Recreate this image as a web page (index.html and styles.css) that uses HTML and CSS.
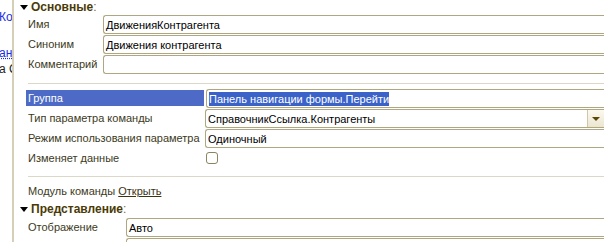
FILE: index.html
```html
<!doctype html>
<html>
<head>
<meta charset="utf-8">
<link rel="stylesheet" href="styles.css">
</head>
<body>
<div class="window">
  <div class="side">
    <div class="side-line link l1">Ко</div>
    <div class="side-line link l2">ан,</div>
    <div class="side-line l3">а С</div>
  </div>
  <div class="props">
    <div class="section-title"><span class="arrow"></span>Основные<span class="colon">:</span></div>

    <div class="row main">
      <div class="label">Имя</div>
      <div class="field">ДвиженияКонтрагента</div>
    </div>
    <div class="row main">
      <div class="label">Синоним</div>
      <div class="field">Движения контрагента</div>
    </div>
    <div class="row main">
      <div class="label">Комментарий</div>
      <div class="field"></div>
    </div>

    <div class="sep first-sep"></div>

    <div class="row cmd">
      <div class="label current">Группа</div>
      <div class="field"><span class="selected">Панель навигации формы.Перейти</span></div>
    </div>
    <div class="row cmd">
      <div class="label">Тип параметра команды</div>
      <div class="field combo">
        <span class="value">СправочникСсылка.Контрагенты</span>
        <span class="drop"><span class="tri"></span></span>
      </div>
    </div>
    <div class="row cmd">
      <div class="label">Режим использования параметра</div>
      <div class="field">Одиночный</div>
    </div>
    <div class="row cmd check-row">
      <div class="label">Изменяет данные</div>
      <div class="checkbox"></div>
    </div>

    <div class="sep"></div>

    <div class="module">Модуль команды <a class="open">Открыть</a></div>

    <div class="section-title second"><span class="arrow"></span>Представление<span class="colon">:</span></div>

    <div class="row view">
      <div class="label">Отображение</div>
      <div class="field">Авто</div>
    </div>
    <div class="row view">
      <div class="label">Подсказка</div>
      <div class="field"></div>
    </div>
  </div>
</div>
</body>
</html>
```

FILE: styles.css
```css
html, body {
    margin: 0;
    padding: 0;
    background: #ffffff;
}
body {
    font-family: "Liberation Sans", Arial, sans-serif;
    font-size: 11px;
    color: #000;
}
.window {
    display: flex;
    width: 604px;
    height: 242px;
    overflow: hidden;
}
.side {
    width: 12px;
    flex: none;
    border-right: 2px solid #d6cfb8;
    overflow: hidden;
    white-space: nowrap;
    font-size: 12px;
}
.side-line {
    height: 16px;
    line-height: 16px;
    margin-left: -1px;
}
.side .link {
    color: #1a2ee6;
}
.side .l1 {
    margin-top: 9px;
}
.side .l2 {
    margin-top: 20px;
    text-decoration: underline dotted;
}
.side .l3 {
    color: #222;
}
.props {
    flex: 1;
    padding-left: 3px;
    overflow: hidden;
}
.section-title {
    display: flex;
    align-items: center;
    height: 14px;
    font-size: 12px;
    font-weight: bold;
    color: #4a3a06;
    white-space: nowrap;
}
.section-title .colon {
    font-weight: normal;
    color: #7a6a40;
}
.arrow {
    width: 0;
    height: 0;
    margin: 0 3px;
    border-left: 4px solid transparent;
    border-right: 4px solid transparent;
    border-top: 5px solid #000;
}
.row {
    display: flex;
    align-items: center;
    height: 20px;
    padding-left: 11px;
    white-space: nowrap;
}
.label {
    flex: none;
    color: #3c3a22;
}
.main .label { width: 74px; }
.cmd .label { width: 174px; }
.view .label { width: 98px; }
.field {
    flex: 1;
    height: 19px;
    line-height: 18px;
    box-sizing: border-box;
    border: 1px solid #aea77f;
    border-right: none;
    border-radius: 3px 0 0 3px;
    padding-left: 2px;
    background: #fff;
    color: #000;
    overflow: hidden;
}
.main .field { margin-left: 1px; }
.cmd .field { margin-left: 3px; }
.cmd .label.current {
    background: #4d6bc6;
    color: #fff;
    height: 16px;
    line-height: 16px;
    margin-left: -2px;
    padding-left: 2px;
    width: 176px;
}
.cmd .label.current + .field { margin-left: 2px; }
.selected {
    background: #3a62c8;
    color: #fff;
    padding: 1px 0;
}
.combo {
    display: flex;
    align-items: stretch;
}
.combo .value { flex: 1; }
.drop {
    width: 16px;
    flex: none;
    display: flex;
    align-items: center;
    justify-content: center;
    border-left: 1px solid #cfc7a6;
    background: linear-gradient(#fbf9f0, #ece6d0);
}
.tri {
    width: 0;
    height: 0;
    border-left: 4px solid transparent;
    border-right: 4px solid transparent;
    border-top: 4px solid #5a4608;
    margin-top: 1px;
}
.checkbox {
    width: 12px;
    height: 12px;
    box-sizing: border-box;
    margin-left: 4px;
    border: 1px solid #8a8462;
    border-radius: 3px;
    background: #fff;
}
.sep {
    height: 1px;
    background: #dcd8c8;
    margin: 8px 0 4px 11px;
}
.sep.first-sep {
    margin-top: 9px;
}
.module {
    height: 20px;
    line-height: 20px;
    padding-left: 11px;
    color: #3c3a22;
    white-space: nowrap;
}
.open {
    color: #3c3310;
    text-decoration: underline;
}
.section-title.second {
    height: 16px;
}
.view .field { margin-left: 0; }
```
